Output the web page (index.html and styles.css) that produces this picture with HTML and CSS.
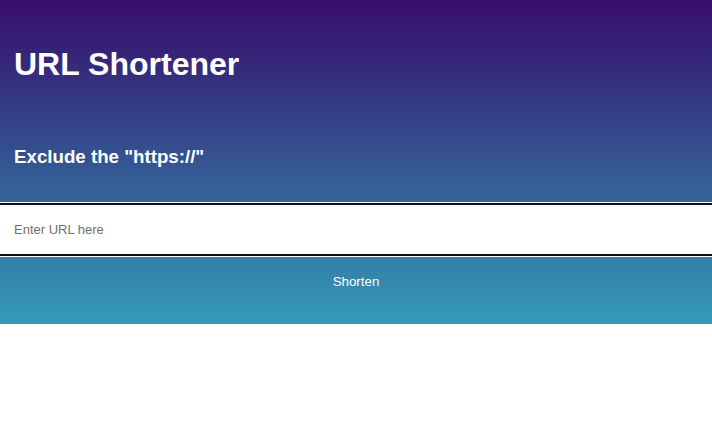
FILE: index.html
```html
<!DOCTYPE html>
<html lang="en">
<head>
<meta charset="utf-8">
<title>URL Shortener</title>
<link rel="stylesheet" href="styles.css">
</head>
<body>
<div class="app">
  <header class="header">
    <h1 class="title">URL Shortener</h1>
    <h3 class="subtitle">Exclude the "https://"</h3>
  </header>
  <div class="input-row">
    <input class="url-input" type="text" placeholder="Enter URL here" autofocus>
  </div>
  <button class="shorten" type="button">Shorten</button>
</div>
</body>
</html>
```

FILE: styles.css
```css
html, body {
  margin: 0;
  padding: 0;
  background: #ffffff;
}

body {
  font-family: "Liberation Sans", Arial, sans-serif;
}

.app {
  display: flex;
  flex-direction: column;
  height: 324px;
  background: linear-gradient(to bottom, #360d6b 0%, #339bb7 100%);
}

.header {
  padding: 46px 14px 34px;
  color: #ffffff;
}

.title {
  margin: 0 0 63px;
  font-size: 32px;
  line-height: 37px;
  font-weight: bold;
}

.subtitle {
  margin: 0;
  font-size: 18.72px;
  line-height: 22px;
  font-weight: bold;
}

.input-row {
  background: #ffffff;
  padding: 1px 0;
  display: flex;
}

.url-input {
  flex: 1;
  box-sizing: border-box;
  height: 53px;
  margin: 0;
  padding: 0 14px;
  border: none;
  border-top: 2px solid #111111;
  border-bottom: 2px solid #111111;
  background: #ffffff;
  font-family: "Liberation Sans", Arial, sans-serif;
  font-size: 13px;
  color: #222222;
  outline: none;
  caret-color: #000000;
}

.url-input::placeholder {
  color: #6f6f6f;
}

.shorten {
  flex: 1;
  margin: 0;
  padding: 17px 0 0;
  border: none;
  background: transparent;
  color: #ffffff;
  font-family: "Liberation Sans", Arial, sans-serif;
  font-size: 13.33px;
  line-height: 15px;
  text-align: center;
  display: flex;
  justify-content: center;
  align-items: flex-start;
}
```
